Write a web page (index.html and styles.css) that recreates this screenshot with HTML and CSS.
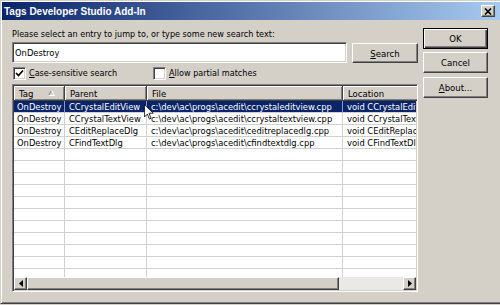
FILE: index.html
```html
<!DOCTYPE html>
<html lang="en">
<head>
    <meta charset="UTF-8">
    <title>Tags Developer Studio Add-In</title>
    <link rel="stylesheet" href="styles.css">
</head>
<body>
    <div class="dialog">
        <div class="titlebar">
            <span class="title">Tags Developer Studio Add-In</span>
            <span class="close">
                <svg width="8" height="7" viewBox="0 0 8 7"><path d="M1 0.5 L7 6.5 M7 0.5 L1 6.5" stroke="#000" stroke-width="1.6"/></svg>
            </span>
        </div>
        <div class="content">
            <div class="main">
                <div class="prompt">Please select an entry to jump to, or type some new search text:</div>
                <div class="search-row">
                    <input type="text" class="textbox" value="OnDestroy">
                    <button class="btn search"><u>S</u>earch</button>
                </div>
                <div class="options">
                    <label class="check first">
                        <span class="box"><svg width="9" height="9" viewBox="0 0 9 9"><path d="M1 4 L3.5 6.5 L8 1.5" fill="none" stroke="#000" stroke-width="1.7"/></svg></span>
                        <span><u>C</u>ase-sensitive search</span>
                    </label>
                    <label class="check">
                        <span class="box"></span>
                        <span><u>A</u>llow partial matches</span>
                    </label>
                </div>
                <div class="listview">
                    <div class="header">
                        <div class="hcell w-tag">Tag
                            <svg class="sort" width="7" height="6" viewBox="0 0 7 6"><path d="M0.5 5.5 L3.5 0.5" stroke="#808080"/><path d="M3.5 0.5 L6.5 5.5 L0.5 5.5" fill="none" stroke="#fff"/></svg>
                        </div>
                        <div class="hcell w-parent">Parent</div>
                        <div class="hcell w-file">File</div>
                        <div class="hcell w-loc">Location</div>
                    </div>
                    <div class="rows">
                        <div class="row selected">
                            <div class="cell w-tag">OnDestroy</div>
                            <div class="cell w-parent">CCrystalEditView</div>
                            <div class="cell w-file">c:\dev\ac\progs\acedit\ccrystaleditview.cpp</div>
                            <div class="cell w-loc">void CCrystalEditView::OnDestroy()</div>
                        </div>
                        <div class="row">
                            <div class="cell w-tag">OnDestroy</div>
                            <div class="cell w-parent">CCrystalTextView</div>
                            <div class="cell w-file">c:\dev\ac\progs\acedit\ccrystaltextview.cpp</div>
                            <div class="cell w-loc">void CCrystalTextView::OnDestroy()</div>
                        </div>
                        <div class="row">
                            <div class="cell w-tag">OnDestroy</div>
                            <div class="cell w-parent">CEditReplaceDlg</div>
                            <div class="cell w-file">c:\dev\ac\progs\acedit\ceditreplacedlg.cpp</div>
                            <div class="cell w-loc">void CEditReplaceDlg::OnDestroy()</div>
                        </div>
                        <div class="row">
                            <div class="cell w-tag">OnDestroy</div>
                            <div class="cell w-parent">CFindTextDlg</div>
                            <div class="cell w-file">c:\dev\ac\progs\acedit\cfindtextdlg.cpp</div>
                            <div class="cell w-loc">void CFindTextDlg::OnDestroy()</div>
                        </div>
                        <div class="row"><div class="cell w-tag"></div><div class="cell w-parent"></div><div class="cell w-file"></div><div class="cell w-loc"></div></div>
                        <div class="row"><div class="cell w-tag"></div><div class="cell w-parent"></div><div class="cell w-file"></div><div class="cell w-loc"></div></div>
                        <div class="row"><div class="cell w-tag"></div><div class="cell w-parent"></div><div class="cell w-file"></div><div class="cell w-loc"></div></div>
                        <div class="row"><div class="cell w-tag"></div><div class="cell w-parent"></div><div class="cell w-file"></div><div class="cell w-loc"></div></div>
                        <div class="row"><div class="cell w-tag"></div><div class="cell w-parent"></div><div class="cell w-file"></div><div class="cell w-loc"></div></div>
                        <div class="row"><div class="cell w-tag"></div><div class="cell w-parent"></div><div class="cell w-file"></div><div class="cell w-loc"></div></div>
                        <div class="row"><div class="cell w-tag"></div><div class="cell w-parent"></div><div class="cell w-file"></div><div class="cell w-loc"></div></div>
                        <div class="row"><div class="cell w-tag"></div><div class="cell w-parent"></div><div class="cell w-file"></div><div class="cell w-loc"></div></div>
                        <div class="row"><div class="cell w-tag"></div><div class="cell w-parent"></div><div class="cell w-file"></div><div class="cell w-loc"></div></div>
                        <div class="row"><div class="cell w-tag"></div><div class="cell w-parent"></div><div class="cell w-file"></div><div class="cell w-loc"></div></div>
                        <div class="row"><div class="cell w-tag"></div><div class="cell w-parent"></div><div class="cell w-file"></div><div class="cell w-loc"></div></div>
                    </div>
                    <div class="hscroll">
                        <div class="sb-btn"><svg width="4" height="7" viewBox="0 0 4 7"><path d="M4 0 L0 3.5 L4 7 Z" fill="#000"/></svg></div>
                        <div class="sb-thumb"></div>
                        <div class="sb-track"></div>
                        <div class="sb-btn"><svg width="4" height="7" viewBox="0 0 4 7"><path d="M0 0 L4 3.5 L0 7 Z" fill="#000"/></svg></div>
                    </div>
                </div>
            </div>
            <div class="side">
                <button class="btn default">OK</button>
                <button class="btn">Cancel</button>
                <button class="btn about"><u>A</u>bout...</button>
            </div>
        </div>
        <svg class="cursor" width="10" height="16" viewBox="0 0 12 19"><path d="M0.5 0.5 V15.5 L4 12 L6.5 18 L8.5 17 L6 11 H11 Z" fill="#fff" stroke="#000"/></svg>
    </div>
</body>
</html>
```

FILE: styles.css
```css
body {
    margin: 0;
    background: #d4d0c8;
    font-family: "DejaVu Sans Condensed", "Liberation Sans", Arial, sans-serif;
    font-size: 9px;
    color: #000;
}

.dialog {
    position: relative;
    width: 500px;
    height: 304px;
    box-sizing: border-box;
    padding: 1px 0 1px 1px;
    background: #d4d0c8;
    border-top: 1px solid #d4d0c8;
    border-left: 1px solid #d4d0c8;
    border-bottom: 1px solid #404040;
    box-shadow: inset 1px 1px #fff, inset 0 -1px #808080;
    overflow: hidden;
}

.titlebar {
    height: 18px;
    display: flex;
    align-items: center;
    justify-content: space-between;
    padding: 0 5px 0 2px;
    background: linear-gradient(to right, #0a246a, #a6caf0);
}

.title {
    color: #fff;
    font-family: "Liberation Sans", Arial, sans-serif;
    font-weight: bold;
    font-size: 10px;
}

.close {
    width: 14px;
    height: 12px;
    box-sizing: border-box;
    display: flex;
    align-items: center;
    justify-content: center;
    background: #d4d0c8;
    border: 1px solid;
    border-color: #fff #404040 #404040 #fff;
    box-shadow: inset -1px -1px #808080;
}

.content {
    display: flex;
    padding: 8px 0 0 10px;
}

.main {
    width: 406px;
    display: flex;
    flex-direction: column;
}

.prompt {
    margin-top: 1px;
    line-height: 11px;
    white-space: nowrap;
}

.search-row {
    display: flex;
    gap: 5px;
    margin-top: 2px;
}

.textbox {
    width: 335px;
    height: 21px;
    box-sizing: border-box;
    margin: 0;
    padding: 0 0 0 2px;
    font-family: inherit;
    font-size: 9.3px;
    color: #000;
    background: #fff;
    border: 1px solid;
    border-color: #808080 #fff #fff #808080;
    box-shadow: inset 1px 1px #404040, inset -1px -1px #d4d0c8;
    outline: none;
}

.btn {
    width: 65px;
    height: 21px;
    box-sizing: border-box;
    margin: 0;
    padding: 0;
    font-family: inherit;
    font-size: 9.5px;
    color: #000;
    background: #d4d0c8;
    border: 1px solid;
    border-color: #fff #404040 #404040 #fff;
    box-shadow: inset -1px -1px #808080;
}

.btn.search {
    width: 66px;
    height: 20px;
    margin-top: 1px;
}

.btn.default {
    border-color: #000;
    box-shadow: inset 1px 1px #fff, inset -1px -1px #404040, inset -2px -2px #808080;
}

.options {
    display: flex;
    margin-top: 4px;
    height: 13px;
}

.check {
    display: flex;
    align-items: center;
    gap: 3px;
    line-height: 13px;
    margin-left: 1px;
}

.check.first {
    width: 139px;
}

.box {
    width: 13px;
    height: 13px;
    box-sizing: border-box;
    display: flex;
    align-items: center;
    justify-content: center;
    background: #fff;
    border: 1px solid;
    border-color: #808080 #fff #fff #808080;
    box-shadow: inset 1px 1px #404040, inset -1px -1px #d4d0c8;
}

.listview {
    margin-top: 4px;
    height: 208px;
    box-sizing: border-box;
    display: flex;
    flex-direction: column;
    background: #fff;
    border: 1px solid;
    border-color: #808080 #fff #fff #808080;
    box-shadow: inset 1px 1px #404040, inset -1px -1px #d4d0c8;
    padding: 1px;
    overflow: hidden;
}

.header {
    display: flex;
    flex: none;
    height: 15px;
    background: #d4d0c8;
    font-size: 9.5px;
}

.hcell {
    flex: none;
    display: flex;
    align-items: center;
    box-sizing: border-box;
    height: 15px;
    padding-left: 5px;
    border-right: 1px solid #404040;
    border-bottom: 1px solid #404040;
    box-shadow: inset 1px 1px #fff, inset -1px -1px #808080;
    white-space: nowrap;
}

.sort {
    margin-left: auto;
    margin-right: 9px;
}

.w-tag { width: 51px; }
.w-parent { width: 82px; }
.w-file { width: 196px; }
.w-loc { width: 120px; }

.rows {
    flex: 1;
    overflow: hidden;
    font-size: 9.3px;
}

.row {
    display: flex;
    height: 12px;
}

.cell {
    flex: none;
    box-sizing: border-box;
    height: 12px;
    line-height: 11px;
    padding-left: 4px;
    border-right: 1px solid #d0d0d0;
    border-bottom: 1px solid #d0d0d0;
    white-space: nowrap;
    overflow: hidden;
}

.cell.w-tag {
    padding-left: 3px;
}

.row.selected .cell {
    background: #0a246a;
    color: #fff;
    border-right-color: #8f9cc0;
}

.hscroll {
    display: flex;
    flex: none;
    height: 13px;
    background: #ebe9e5;
}

.sb-btn,
.sb-thumb {
    box-sizing: border-box;
    height: 13px;
    background: #d4d0c8;
    border: 1px solid;
    border-color: #fff #404040 #404040 #fff;
    box-shadow: inset -1px -1px #808080;
}

.sb-btn {
    width: 13px;
    display: flex;
    align-items: center;
    justify-content: center;
}

.sb-thumb {
    width: 312px;
}

.sb-track {
    flex: 1;
}

.side {
    width: 65px;
    margin-left: 5px;
    display: flex;
    flex-direction: column;
    gap: 3px;
}

.btn.about {
    margin-top: 1px;
}

.cursor {
    position: absolute;
    left: 143px;
    top: 103px;
}
```
